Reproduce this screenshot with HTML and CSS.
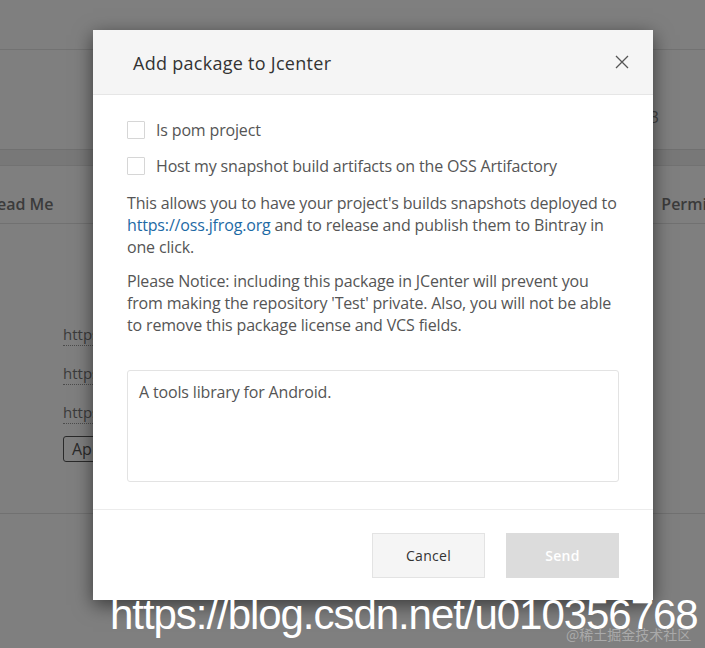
FILE: index.html
```html
<!DOCTYPE html>
<html>
<head>
<meta charset="utf-8">
<link rel="stylesheet" href="styles.css">
</head>
<body>
<div class="page">
  <div class="topbar"></div>
  <div class="summary"><span class="summary-num">3</span></div>
  <div class="band"></div>
  <div class="tabs">
    <span class="tab tab-readme">ead Me</span>
    <span class="tab tab-perm">Permi</span>
  </div>
  <div class="content">
    <div class="links">
      <span class="link-line">https://github.com</span>
      <span class="link-line">https://github.com</span>
      <span class="link-line">https://github.com</span>
      <span class="apply-btn">Apply</span>
    </div>
  </div>
  <div class="rest"></div>
</div>
<div class="overlay"></div>

<div class="modal">
  <div class="modal-header">
    <h2 class="modal-title">Add package to Jcenter</h2>
    <svg class="close" width="14" height="14" viewBox="0 0 14 14"><path d="M1 1 L13 13 M13 1 L1 13" stroke="#555" stroke-width="1.3" fill="none"/></svg>
  </div>
  <div class="modal-body">
    <label class="check-row"><span class="box"></span><span>Is pom project</span></label>
    <label class="check-row"><span class="box"></span><span>Host my snapshot build artifacts on the OSS Artifactory</span></label>
    <p class="para">This allows you to have your project's builds snapshots deployed to <a class="link" href="#">https://oss.jfrog.org</a> and to release and publish them to Bintray in one click.</p>
    <p class="para">Please Notice: including this package in JCenter will prevent you from making the repository 'Test' private. Also, you will not be able to remove this package license and VCS fields.</p>
    <div class="textarea">A tools library for Android.</div>
  </div>
  <div class="modal-footer">
    <button class="btn btn-cancel">Cancel</button>
    <button class="btn btn-send">Send</button>
  </div>
</div>

<div class="watermark">https://blog.csdn.net/u010356768</div>
<div class="watermark-small">@稀土掘金技术社区</div>
</body>
</html>
```
FILE: styles.css
```css
html, body {
  margin: 0;
  padding: 0;
  width: 705px;
  height: 648px;
  overflow: hidden;
  background: #fff;
  font-family: "Open Sans", "Noto Sans", sans-serif;
}

.page {
  width: 705px;
  height: 648px;
  display: flex;
  flex-direction: column;
  background: #fff;
}

.topbar {
  height: 49px;
  border-bottom: 1px solid #e4e4e4;
}

.summary {
  height: 100px;
  display: flex;
  justify-content: flex-end;
  align-items: flex-start;
  padding-top: 56px;
  box-sizing: border-box;
  padding-right: 46px;
  color: #888;
  font-size: 16px;
  line-height: 22px;
  border-bottom: 1px solid #e0e0e0;
}

.band {
  height: 15px;
  background: #f0f0f0;
  border-bottom: 1px solid #e4e4e4;
}

.tabs {
  height: 58px;
  box-sizing: border-box;
  padding-top: 27px;
  display: flex;
  justify-content: space-between;
  align-items: flex-start;
  border-bottom: 1px solid #e2e2e2;
  font-size: 16px;
  line-height: 22px;
  font-weight: 600;
  color: #777;
  margin-left: -3px;
}

.tab-perm { margin-right: -2px; }

.content {
  height: 289px;
  border-bottom: 1px solid #e2e2e2;
  padding-left: 63px;
}

.links {
  display: flex;
  flex-direction: column;
  align-items: flex-start;
  padding-top: 99px;
  gap: 16px;
  color: #777;
  font-size: 15px;
}

.link-line {
  line-height: 22px;
  border-bottom: 1px dotted #999;
}

.apply-btn {
  margin-top: -4px;
  border: 1px solid #555;
  border-radius: 3px;
  padding: 2px 8px;
  line-height: 20px;
  font-size: 16px;
  color: #555;
}

.rest { flex: 1; }

.overlay {
  position: absolute;
  inset: 0;
  background: rgba(0, 0, 0, 0.5);
}

.modal {
  position: absolute;
  left: 93px;
  top: 30px;
  width: 560px;
  height: 570px;
  background: #fff;
  box-shadow: 0 5px 18px rgba(0, 0, 0, 0.55);
  display: flex;
  flex-direction: column;
  color: #555;
}

.modal-header {
  height: 64px;
  background: #f5f5f5;
  border-bottom: 1px solid #e6e6e6;
  display: flex;
  align-items: center;
  justify-content: space-between;
  padding: 0 24px 0 40px;
}

.modal-title {
  margin: 0;
  font-size: 18px;
  font-weight: 500;
  color: #333;
  font-stretch: 88%;
  letter-spacing: 0.28px;
  padding-top: 2px;
}

.close { margin-top: 0; }

.modal-body {
  padding: 24px 34px 27px;
  display: flex;
  flex-direction: column;
  font-size: 16px;
  line-height: 22px;
  font-stretch: 88%;
  letter-spacing: -0.16px;
  border-bottom: 1px solid #ececec;
}

.check-row {
  display: flex;
  align-items: center;
  gap: 11px;
  height: 22px;
  margin-bottom: 14px;
}

.box {
  width: 16px;
  height: 16px;
  border: 1px solid #d6d6d6;
  border-radius: 1px;
  background: #fff;
}

.para {
  margin: 1px 0 11px;
}

.link {
  color: #1d6aa5;
  text-decoration: none;
}

.textarea {
  margin-top: 23px;
  height: 112px;
  border: 1px solid #e3e3e3;
  border-radius: 3px;
  padding: 10px 11px;
  box-sizing: border-box;
  line-height: 22px;
}

.modal-footer {
  flex: 1;
  display: flex;
  justify-content: flex-end;
  align-items: flex-start;
  gap: 21px;
  padding: 23px 34px 0;
}

.btn {
  width: 113px;
  height: 45px;
  font-family: "Open Sans", sans-serif;
  font-size: 14px;
  font-weight: 500;
  font-stretch: 88%;
  letter-spacing: 0.3px;
  border-radius: 0;
}

.btn-cancel {
  background: #f5f5f5;
  border: 1px solid #e3e3e3;
  color: #333;
}

.btn-send {
  background: #dcdcdc;
  border: 1px solid #dcdcdc;
  color: #fff;
  font-weight: 600;
}

.watermark {
  position: absolute;
  left: 110px;
  top: 590px;
  font-family: "Liberation Sans", Arial, sans-serif;
  font-size: 42px;
  letter-spacing: -1.05px;
  line-height: 50px;
  color: #fff;
  white-space: nowrap;
}

.watermark-small {
  position: absolute;
  left: 566px;
  top: 624px;
  font-family: "Noto Sans CJK SC", sans-serif;
  font-size: 14px;
  line-height: 20px;
  color: rgba(175, 175, 175, 0.9);
  white-space: nowrap;
}
```
